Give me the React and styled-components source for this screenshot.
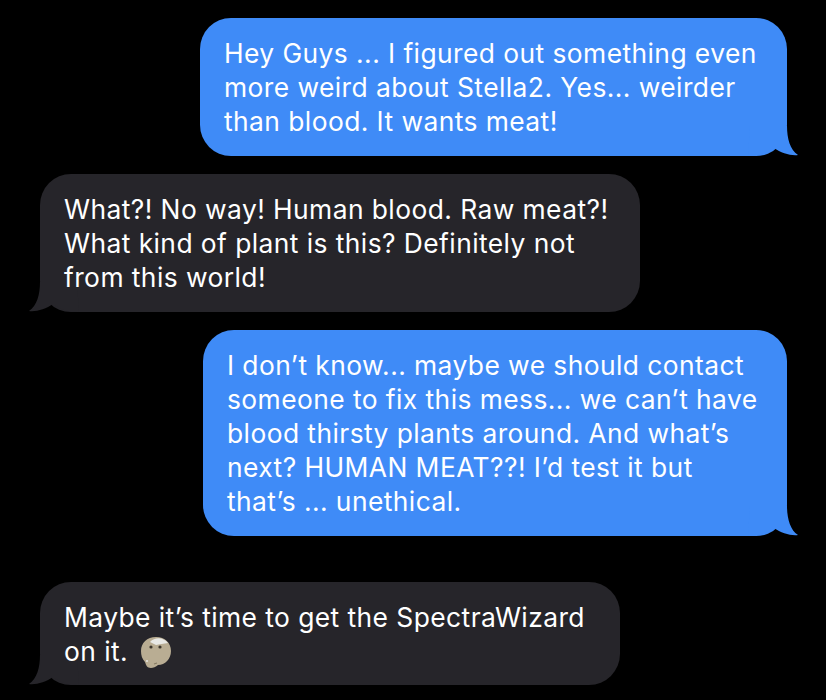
import styled, { createGlobalStyle } from 'styled-components';

const GlobalStyle = createGlobalStyle`
  html, body {
    margin: 0;
    padding: 0;
    background: #000;
  }
`;

const Thread = styled.div`
  width: 826px;
  height: 700px;
  box-sizing: border-box;
  padding: 18px 39px 0 40px;
  display: flex;
  flex-direction: column;
  background: #000;
  overflow: hidden;
  font-family: Inter, "Liberation Sans", sans-serif;
`;

const Bubble = styled.div`
  position: relative;
  box-sizing: border-box;
  width: ${(p) => p.$width}px;
  margin-top: ${(p) => p.$gap || 0}px;
  align-self: ${(p) => (p.$mine ? 'flex-end' : 'flex-start')};
  padding: 18px 24px ${(p) => p.$bottom || 18}px;
  border-radius: 31px;
  background: ${(p) => (p.$mine ? '#3f8bf7' : '#26252a')};
  color: #fff;
  font-size: 26.4px;
  font-weight: 370;
  line-height: 34px;
  letter-spacing: 0.43px;
`;

const Line = styled.div`
  position: relative;
  z-index: 1;
  white-space: nowrap;
`;

const TailShape = styled.svg`
  position: absolute;
  bottom: 0;
  ${(p) => (p.$mine ? 'right: -11px;' : 'left: -11px;')}
  width: 50px;
  height: 30px;
  ${(p) => (p.$mine ? '' : 'transform: scaleX(-1);')}
`;

const Tail = ({ mine }) => (
  <TailShape $mine={mine} viewBox="0 0 50 30">
    <path
      d="M2 0 L39 0 C39 12 42 24 50 29 C43 30 33 27 26 22 C20 27 12 30 0 30 Z"
      fill={mine ? '#3f8bf7' : '#26252a'}
    />
  </TailShape>
);

const EmojiIcon = styled.svg`
  display: inline-block;
  width: 32px;
  height: 33px;
  margin-left: 12px;
  vertical-align: -8px;
`;

const ThinkingFace = () => (
  <EmojiIcon viewBox="0 0 32 33">
    <path
      d="M16 1 C25 1 31 7 31 15 C31 23 25 29 18 29 C16 31 13 32 11 32 C7 32 6 29 5 26 C2 23 1 19 1 15 C1 7 7 1 16 1 Z"
      fill="#b9ad93"
    />
    <path d="M10 6 C15 1 23 1 28 7 C24 8 19 8 16 9 C14 8 12 7 10 6 Z" fill="#e8e8e4" />
    <circle cx="11" cy="11" r="1.6" fill="#3b352b" />
    <circle cx="20" cy="11" r="1.6" fill="#3b352b" />
    <path d="M14 28 L17 27" stroke="#857a63" strokeWidth="1.2" />
    <circle cx="7" cy="25" r="1" fill="#e8e8e4" />
  </EmojiIcon>
);

export default function App() {
  return (
    <>
      <GlobalStyle />
      <Thread>
        <Bubble $mine $width={587}>
          <Line>Hey Guys ... I figured out something even</Line>
          <Line>more weird about Stella2. Yes... weirder</Line>
          <Line>than blood. It wants meat!</Line>
          <Tail mine />
        </Bubble>
        <Bubble $width={600} $gap={18}>
          <Line>What?! No way! Human blood. Raw meat?!</Line>
          <Line>What kind of plant is this? Definitely not</Line>
          <Line>from this world!</Line>
          <Tail />
        </Bubble>
        <Bubble $mine $width={584} $gap={18}>
          <Line>I don’t know... maybe we should contact</Line>
          <Line>someone to fix this mess... we can’t have</Line>
          <Line>blood thirsty plants around. And what’s</Line>
          <Line>next? HUMAN MEAT??! I’d test it but</Line>
          <Line>that’s ... unethical.</Line>
          <Tail mine />
        </Bubble>
        <Bubble $width={580} $gap={46} $bottom={16}>
          <Line>Maybe it’s time to get the SpectraWizard</Line>
          <Line>on it.<ThinkingFace /></Line>
          <Tail />
        </Bubble>
      </Thread>
    </>
  );
}
